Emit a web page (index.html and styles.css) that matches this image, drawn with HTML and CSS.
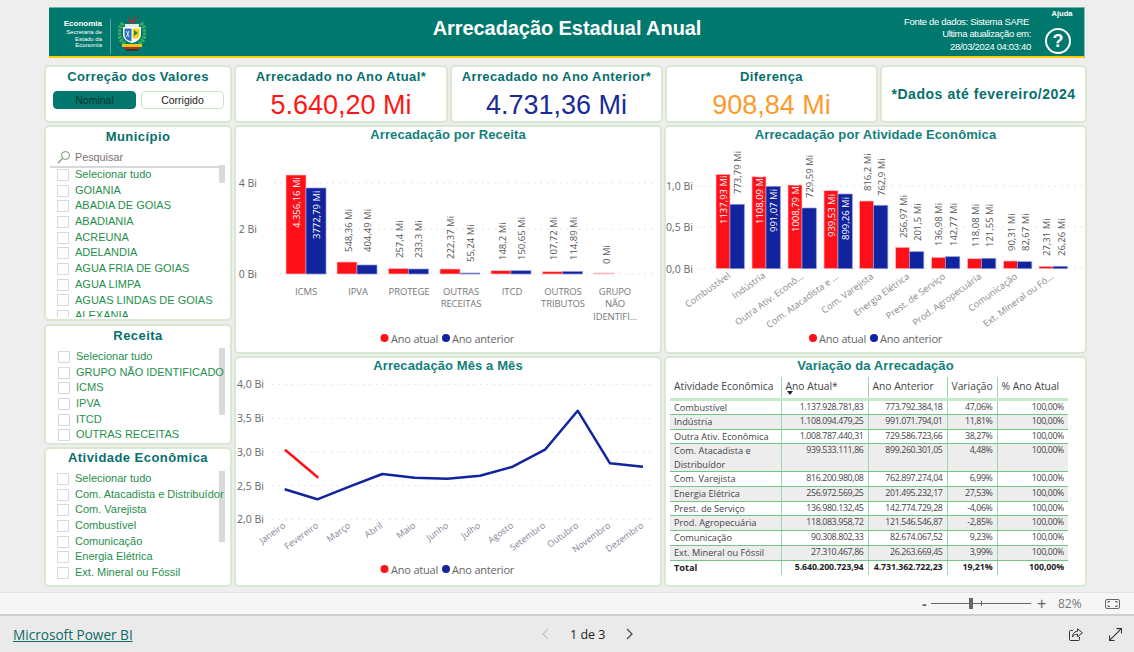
FILE: index.html
```html
<!DOCTYPE html>
<html lang="pt-BR">
<head>
<meta charset="utf-8">
<title>Arrecadação Estadual Anual</title>
<link rel="stylesheet" href="styles.css">
</head>
<body>
<main class="report">
  <header class="banner">
    <div class="brand">
      <div class="brand-text"><strong>Economia</strong><span>Secretaria de</span><span>Estado da</span><span>Economia</span></div>
      <svg class="crest" width="28" height="37" viewBox="0 0 28 37">
        <path d="M5 8C-1 15 0 24 7 29M23 8C29 15 28 24 21 29" fill="none" stroke="#3fae5a" stroke-width="4" stroke-dasharray="2.500 1"/>
        <path d="M9 9C7 14 7 22 10 27M19 9C21 14 21 22 18 27" fill="none" stroke="#0f5f45" stroke-width="1"/>
        <path d="M10 1l4 5 5-6-2 8h-6z" fill="#8a3d42"/>
        <rect x="7" y="9" width="14" height="3" fill="#dfeee4"/>
        <path d="M5 12h18v7c0 5-4 8-9 9-5-1-9-4-9-9z" fill="#fff"/>
        <path d="M6.500 13.500h7v13c-4-1-7-3-7-7z" fill="#2a6fc0"/>
        <path d="M14.500 13.500h7v6c0 2-1 3-2 4h-5z" fill="#f4d21c"/>
        <path d="M16 15l4 3-4 3z" fill="#2a8a3c"/>
        <path d="M8.500 16l2.500 6M11 16l-2.500 6" stroke="#fff" stroke-width=".8"/>
        <rect x="4" y="29" width="20" height="3" fill="#e9c61a"/>
        <rect x="6" y="32" width="16" height="2" fill="#b5302a"/>
        <rect x="8" y="34" width="12" height="2" fill="#26402a"/>
      </svg>
    </div>
    <h1 class="banner-title">Arrecadação Estadual Anual</h1>
    <div class="source">
      <span class="source-first">Fonte de dados: Sistema SARE</span>
      <span>Ultima atualização em:</span>
      <span>28/03/2024 04:03:40</span>
    </div>
    <div class="help">
      <span class="help-label">Ajuda</span>
      <span class="help-icon">?</span>
    </div>
  </header>

  <section class="kpis">
    <div class="card kpi kpi-toggle">
      <h2 class="kpi-title">Correção dos Valores</h2>
      <div class="toggle"><span class="toggle-btn is-on">Nominal</span><span class="toggle-btn">Corrigido</span></div>
    </div>
    <div class="card kpi kpi-wide">
      <h2 class="kpi-title">Arrecadado no Ano Atual*</h2>
      <div class="kpi-value red">5.640,20 Mi</div>
    </div>
    <div class="card kpi">
      <h2 class="kpi-title">Arrecadado no Ano Anterior*</h2>
      <div class="kpi-value navy">4.731,36 Mi</div>
    </div>
    <div class="card kpi">
      <h2 class="kpi-title">Diferença</h2>
      <div class="kpi-value orange">908,84 Mi</div>
    </div>
    <div class="card kpi kpi-note">*Dados até fevereiro/2024</div>
  </section>

  <section class="body-row">
    <aside class="filters">
      <div class="card slicer slicer-mun">
        <h2 class="slicer-title">Município</h2>
        <div class="search">
          <svg width="14" height="14" viewBox="0 0 14 14"><circle cx="8.500" cy="5.500" r="4" fill="none" stroke="#6f9a6f" stroke-width="1"/><path d="M5.500 8.500L1 13" stroke="#6f9a6f" stroke-width="1.300"/></svg>
          <span>Pesquisar</span>
        </div>
        <ul class="items items-clip">
          <li><i></i>Selecionar tudo</li>
          <li><i></i>GOIANIA</li>
          <li><i></i>ABADIA DE GOIAS</li>
          <li><i></i>ABADIANIA</li>
          <li><i></i>ACREUNA</li>
          <li><i></i>ADELANDIA</li>
          <li><i></i>AGUA FRIA DE GOIAS</li>
          <li><i></i>AGUA LIMPA</li>
          <li><i></i>AGUAS LINDAS DE GOIAS</li>
          <li><i></i>ALEXANIA</li>
        </ul>
        <b class="scroll scroll-mun"></b>
      </div>
      <div class="card slicer slicer-rec">
        <h2 class="slicer-title">Receita</h2>
        <ul class="items items-rec">
          <li><i></i>Selecionar tudo</li>
          <li><i></i>GRUPO NÃO IDENTIFICADO</li>
          <li><i></i>ICMS</li>
          <li><i></i>IPVA</li>
          <li><i></i>ITCD</li>
          <li><i></i>OUTRAS RECEITAS</li>
        </ul>
        <b class="scroll scroll-rec"></b>
      </div>
      <div class="card slicer slicer-ativ">
        <h2 class="slicer-title">Atividade Econômica</h2>
        <ul class="items items-ativ">
          <li><i></i>Selecionar tudo</li>
          <li><i></i>Com. Atacadista e Distribuídor</li>
          <li><i></i>Com. Varejista</li>
          <li><i></i>Combustível</li>
          <li><i></i>Comunicação</li>
          <li><i></i>Energia Elétrica</li>
          <li><i></i>Ext. Mineral ou Fóssil</li>
        </ul>
        <b class="scroll scroll-ativ"></b>
      </div>
    </aside>

    <div class="charts">
      <article class="card chart">
        <h2 class="chart-title">Arrecadação por Receita</h2>
        <svg class="plot" viewBox="2 22 424 205">
          <g class="grid"><path d="M40 58H423M40 104H423M40 149H423"/></g>
          <g class="axis"><text x="23" y="58">4 Bi</text><text x="23" y="104">2 Bi</text><text x="23" y="149">0 Bi</text></g>
          <g class="red-bar">
            <rect x="52" y="50" width="20" height="99"/><rect x="103" y="137" width="20" height="12"/><rect x="154.500" y="143.500" width="20" height="5.500"/><rect x="206" y="144" width="20" height="5"/><rect x="257" y="145.700" width="20" height="3.300"/><rect x="308.500" y="146.700" width="20" height="2.300"/>
          </g>
          <rect class="pale-bar" x="360" y="148" width="20" height="1"/>
          <g class="navy-bar">
            <rect x="72" y="63" width="20" height="86"/><rect x="123" y="140" width="20" height="9"/><rect x="174.500" y="144" width="20" height="5"/><rect x="226" y="148" width="20" height="1"/><rect x="277" y="145.700" width="20" height="3.300"/><rect x="328.500" y="146.500" width="20" height="2.500"/>
          </g>
          <g class="dl dl-in">
            <text transform="translate(62 103) rotate(-90)">4.356,16 Mi</text>
            <text transform="translate(82 114) rotate(-90)">3772,79 Mi</text>
          </g>
          <g class="dl">
            <text transform="translate(114 127) rotate(-90)">548,36 Mi</text>
            <text transform="translate(133 127) rotate(-90)">404,49 Mi</text>
            <text transform="translate(165 133) rotate(-90)">257,4 Mi</text>
            <text transform="translate(184 133) rotate(-90)">233,3 Mi</text>
            <text transform="translate(216 134) rotate(-90)">222,37 Mi</text>
            <text transform="translate(236 137) rotate(-90)">55,24 Mi</text>
            <text transform="translate(268 135) rotate(-90)">148,2 Mi</text>
            <text transform="translate(287 135) rotate(-90)">150,65 Mi</text>
            <text transform="translate(319 135) rotate(-90)">107,72 Mi</text>
            <text transform="translate(339 135) rotate(-90)">114,89 Mi</text>
            <text transform="translate(372 139) rotate(-90)">0 Mi</text>
          </g>
          <g class="cat">
            <text x="72" y="166">ICMS</text><text x="124" y="166">IPVA</text><text x="175" y="166">PROTEGE</text>
            <text x="227" y="166">OUTRAS</text><text x="227" y="178.500">RECEITAS</text>
            <text x="278" y="166">ITCD</text>
            <text x="329" y="166">OUTROS</text><text x="329" y="178.500">TRIBUTOS</text>
            <text x="381" y="166">GRUPO</text><text x="381" y="178.500">NÃO</text><text x="381" y="191">IDENTIFI...</text>
          </g>
          <g class="legend">
            <circle class="dot-red" cx="150.500" cy="213" r="4"/><text x="157" y="213">Ano atual</text>
            <circle class="dot-navy" cx="212" cy="213" r="4"/><text x="218" y="213">Ano anterior</text>
          </g>
        </svg>
      </article>

      <article class="card chart">
        <h2 class="chart-title">Arrecadação por Atividade Econômica</h2>
        <svg class="plot" viewBox="2 22 419 205">
          <g class="grid"><path d="M33 61H418M33 102H418M33 143.700H418"/></g>
          <g class="axis"><text x="29" y="61">1,0 Bi</text><text x="29" y="102">0,5 Bi</text><text x="29" y="143.700">0,0 Bi</text></g>
          <g class="red-bar">
            <rect x="52" y="49.300" width="14" height="94.400"/><rect x="88" y="51.700" width="14" height="92"/><rect x="124" y="60" width="14" height="83.700"/><rect x="160" y="65.700" width="14" height="78"/><rect x="195.500" y="76" width="14" height="67.700"/><rect x="231.500" y="122.300" width="14" height="21.400"/><rect x="267.500" y="132.300" width="14" height="11.400"/><rect x="303.500" y="133.700" width="14" height="10"/><rect x="339.500" y="136" width="14" height="7.700"/><rect x="375" y="141.300" width="14" height="2.400"/>
          </g>
          <g class="navy-bar">
            <rect x="66" y="79.300" width="14.300" height="64.400"/><rect x="102" y="61.300" width="14.300" height="82.400"/><rect x="138" y="83" width="14.300" height="60.700"/><rect x="174" y="69" width="14.300" height="74.700"/><rect x="209.500" y="80.300" width="14.300" height="63.400"/><rect x="245.500" y="126.700" width="14.300" height="17"/><rect x="281.500" y="131.700" width="14.300" height="12"/><rect x="317.500" y="133.300" width="14.300" height="10.400"/><rect x="353.500" y="136.700" width="14.300" height="7"/><rect x="389" y="141.300" width="14.300" height="2.400"/>
          </g>
          <g class="dl dl-in">
            <text transform="translate(59 99) rotate(-90)">1137,93 Mi</text>
            <text transform="translate(95 99) rotate(-90)">1108,09 Mi</text>
            <text transform="translate(109 107) rotate(-90)">991,07 Mi</text>
            <text transform="translate(131 107) rotate(-90)">1008,79 Mi</text>
            <text transform="translate(167 112) rotate(-90)">939,53 Mi</text>
            <text transform="translate(181 115) rotate(-90)">899,26 Mi</text>
          </g>
          <g class="dl">
            <text transform="translate(73 69) rotate(-90)">773,79 Mi</text>
            <text transform="translate(145 73) rotate(-90)">729,59 Mi</text>
            <text transform="translate(203 66) rotate(-90)">816,2 Mi</text>
            <text transform="translate(217 71) rotate(-90)">762,9 Mi</text>
            <text transform="translate(239 113) rotate(-90)">256,97 Mi</text>
            <text transform="translate(253 116) rotate(-90)">201,5 Mi</text>
            <text transform="translate(274 121) rotate(-90)">136,98 Mi</text>
            <text transform="translate(289 121) rotate(-90)">142,77 Mi</text>
            <text transform="translate(311 122) rotate(-90)">118,08 Mi</text>
            <text transform="translate(325 122) rotate(-90)">121,55 Mi</text>
            <text transform="translate(347 126) rotate(-90)">90,31 Mi</text>
            <text transform="translate(361 126) rotate(-90)">82,67 Mi</text>
            <text transform="translate(382 131) rotate(-90)">27,31 Mi</text>
            <text transform="translate(397 131) rotate(-90)">26,26 Mi</text>
          </g>
          <g class="slant">
            <text transform="translate(65 149) rotate(-36)">Combustível</text>
            <text transform="translate(100 149) rotate(-36)">Indústria</text>
            <text transform="translate(138 150) rotate(-36)">Outra Ativ. Econô...</text>
            <text transform="translate(173 150) rotate(-36)">Com. Atacadista e ...</text>
            <text transform="translate(208 150) rotate(-36)">Com. Varejista</text>
            <text transform="translate(244 150) rotate(-36)">Energia Elétrica</text>
            <text transform="translate(280 150) rotate(-36)">Prest. de Serviço</text>
            <text transform="translate(316 150) rotate(-36)">Prod. Agropecuária</text>
            <text transform="translate(352 150) rotate(-36)">Comunicação</text>
            <text transform="translate(388 150) rotate(-36)">Ext. Mineral ou Fó...</text>
          </g>
          <g class="legend">
            <circle class="dot-red" cx="149" cy="213" r="4"/><text x="155" y="213">Ano atual</text>
            <circle class="dot-navy" cx="210" cy="213" r="4"/><text x="216" y="213">Ano anterior</text>
          </g>
        </svg>
      </article>

      <article class="card chart">
        <h2 class="chart-title">Arrecadação Mês a Mês</h2>
        <svg class="plot" viewBox="2 24 424 207">
          <g class="grid"><path d="M38 30.300H420M38 64.300H420M38 98H420M38 131.700H420M38 165.300H420"/></g>
          <g class="axis"><text x="30" y="30.300">4,0 Bi</text><text x="30" y="64.300">3,5 Bi</text><text x="30" y="98">3,0 Bi</text><text x="30" y="131.700">2,5 Bi</text><text x="30" y="165.300">2,0 Bi</text></g>
          <polyline class="line-navy" points="50.700,135.300 83.300,145.300 116,132.300 148.300,120 180.700,123.700 213.300,124.700 246,121.700 278.700,112.700 311,95.700 343.700,56.700 376,109.300 409,112.700"/>
          <polyline class="line-red" points="51,95.700 84.300,123.700"/>
          <g class="slant slant-months">
            <text transform="translate(50 170) rotate(-36)">Janeiro</text>
            <text transform="translate(83 170) rotate(-36)">Fevereiro</text>
            <text transform="translate(115 170) rotate(-36)">Março</text>
            <text transform="translate(147 170) rotate(-36)">Abril</text>
            <text transform="translate(180 170) rotate(-36)">Maio</text>
            <text transform="translate(213 170) rotate(-36)">Junho</text>
            <text transform="translate(245 170) rotate(-36)">Julho</text>
            <text transform="translate(278 170) rotate(-36)">Agosto</text>
            <text transform="translate(310 170) rotate(-36)">Setembro</text>
            <text transform="translate(343 170) rotate(-36)">Outubro</text>
            <text transform="translate(375 170) rotate(-36)">Novembro</text>
            <text transform="translate(408 170) rotate(-36)">Dezembro</text>
          </g>
          <g class="legend">
            <circle class="dot-red" cx="150.500" cy="215" r="4"/><text x="157" y="215">Ano atual</text>
            <circle class="dot-navy" cx="212" cy="215" r="4"/><text x="218" y="215">Ano anterior</text>
          </g>
        </svg>
      </article>

      <article class="card chart">
        <h2 class="chart-title">Variação da Arrecadação</h2>
        <table class="matrix">
          <colgroup><col class="c1"><col class="c2"><col class="c3"><col class="c4"><col class="c5"></colgroup>
          <thead>
            <tr><th>Atividade Econômica</th><th>Ano Atual*<span class="sort"></span></th><th>Ano Anterior</th><th>Variação</th><th>% Ano Atual</th></tr>
          </thead>
          <tbody>
            <tr><td>Combustível</td><td>1.137.928.781,83</td><td>773.792.384,18</td><td>47,06%</td><td>100,00%</td></tr>
            <tr><td>Indústria</td><td>1.108.094.479,25</td><td>991.071.794,01</td><td>11,81%</td><td>100,00%</td></tr>
            <tr><td>Outra Ativ. Econômica</td><td>1.008.787.440,31</td><td>729.586.723,66</td><td>38,27%</td><td>100,00%</td></tr>
            <tr><td>Com. Atacadista e Distribuídor</td><td>939.533.111,86</td><td>899.260.301,05</td><td>4,48%</td><td>100,00%</td></tr>
            <tr><td>Com. Varejista</td><td>816.200.980,08</td><td>762.897.274,04</td><td>6,99%</td><td>100,00%</td></tr>
            <tr><td>Energia Elétrica</td><td>256.972.569,25</td><td>201.495.232,17</td><td>27,53%</td><td>100,00%</td></tr>
            <tr><td>Prest. de Serviço</td><td>136.980.132,45</td><td>142.774.729,28</td><td>-4,06%</td><td>100,00%</td></tr>
            <tr><td>Prod. Agropecuária</td><td>118.083.958,72</td><td>121.546.546,87</td><td>-2,85%</td><td>100,00%</td></tr>
            <tr><td>Comunicação</td><td>90.308.802,33</td><td>82.674.067,52</td><td>9,23%</td><td>100,00%</td></tr>
            <tr><td>Ext. Mineral ou Fóssil</td><td>27.310.467,86</td><td>26.263.669,45</td><td>3,99%</td><td>100,00%</td></tr>
          </tbody>
          <tfoot>
            <tr><td>Total</td><td>5.640.200.723,94</td><td>4.731.362.722,23</td><td>19,21%</td><td>100,00%</td></tr>
          </tfoot>
        </table>
      </article>
    </div>
  </section>
</main>

<div class="zoombar">
  <span class="zoom-sign">-</span>
  <span class="slider"><b class="thumb"></b><b class="tick"></b></span>
  <span class="zoom-sign zoom-plus">+</span>
  <span class="zoom-pct">82%</span>
  <svg class="fit" width="15" height="10" viewBox="0 0 15 10"><rect x=".5" y=".5" width="14" height="9" rx="1.500" fill="none" stroke="#666"/><path d="M3 4V2.500H5M10 2.500H12V4M12 6V7.500H10M5 7.500H3V6" fill="none" stroke="#666"/></svg>
</div>

<footer class="footer">
  <a class="pbi-link" href="#">Microsoft Power BI</a>
  <nav class="pager">
    <svg width="8" height="12" viewBox="0 0 8 12"><path d="M7 1L2 6l5 5" fill="none" stroke="#c4c4c4" stroke-width="1.200"/></svg>
    <span>1 de 3</span>
    <svg width="8" height="12" viewBox="0 0 8 12"><path d="M1 1l5 5-5 5" fill="none" stroke="#444" stroke-width="1.200"/></svg>
  </nav>
  <div class="foot-icons">
    <svg width="14" height="13" viewBox="0 0 14 13"><path d="M4 2.500H1.500a1 1 0 0 0-1 1v8a1 1 0 0 0 1 1h8a1 1 0 0 0 1-1V9" fill="none" stroke="#333"/><path d="M8.500.8l5 4-5 4V6.300C6 6.300 4.500 7 3.500 9 3.500 5.500 5.500 3.500 8.500 3.300z" fill="none" stroke="#333"/></svg>
    <svg width="13" height="13" viewBox="0 0 13 13"><path d="M.8 12.200L12.200.8M7.500.6h5v5M.6 7.500v5h5" fill="none" stroke="#333" stroke-width="1.100"/></svg>
  </div>
</footer>
</body>
</html>
```
FILE: styles.css
```css
* { box-sizing: border-box; }
html, body { margin: 0; height: 652px; overflow: hidden; }
body {
  background: #eeeeee;
  font-family: "Liberation Sans", Arial, sans-serif;
  display: flex;
  flex-direction: column;
}
h1, h2, ul { margin: 0; padding: 0; }
ul { list-style: none; }

.report { height: 592px; padding: 7px 0 0 44px; }

.banner {
  display: flex;
  align-items: flex-start;
  width: 1035px;
  height: 51px;
  margin-left: 5px;
  background: #00786d;
  border-top: 1px solid #6fb0a8;
  border-bottom: 2px solid #ffcb05;
  color: #fff;
  box-shadow: 1px 0 0 #8fbdb6;
}
.brand { display: flex; width: 105px; padding-top: 11px; }
.brand-text {
  display: flex;
  flex-direction: column;
  align-items: flex-end;
  width: 62px;
  height: 35px;
  padding-right: 8px;
  border-right: 1px solid #5aa79e;
  font-size: 6px;
  line-height: 6.600px;
  white-space: nowrap;
}
.brand-text strong { font-size: 8px; line-height: 10px; }
.crest { margin: -4px 0 0 7px; }
.banner-title {
  flex: none;
  width: 280px;
  margin: 8px 0 0 273px;
  text-align: center;
  font-size: 20px;
  line-height: 24px;
  font-weight: 700;
  letter-spacing: -.07px;
  white-space: nowrap;
}
.source {
  flex: none;
  width: 135px;
  margin-left: 189px;
  padding-top: 8px;
  display: flex;
  flex-direction: column;
  align-items: flex-end;
  font-size: 9.500px;
  line-height: 12.300px;
  letter-spacing: -.33px;
  white-space: nowrap;
}
.source-first { margin-right: 2px; }
.help { flex: none; margin-left: 11px; width: 32px; display: flex; flex-direction: column; align-items: center; }
.help-label { margin-left: 8px; font-size: 7.500px; font-weight: 700; line-height: 10px; padding-top: 1px; }
.help-icon {
  width: 26px;
  height: 26px;
  margin-top: 9px;
  border: 2px solid #fff;
  border-radius: 50%;
  text-align: center;
  font-size: 18px;
  font-weight: 700;
  line-height: 22px;
}

.card {
  position: relative;
  background: #fff;
  border: 2px solid #d9e8d2;
  border-radius: 5px;
}

.kpis { display: flex; gap: 2px; height: 58px; margin-top: 7px; }
.kpi { width: 213px; text-align: center; padding-top: 2px; }
.kpi-toggle { width: 188px; }
.kpi-wide { width: 214px; }
.kpi-title {
  font-size: 13px;
  line-height: 15px;
  font-weight: 700;
  letter-spacing: .4px;
  color: #06706c;
  white-space: nowrap;
}
.kpi-value { font-size: 27px; line-height: 31px; margin-top: 6px; }
.red { color: #ff1616; }
.navy { color: #1a2a96; }
.orange { color: #fb9b2c; }
.kpi-note {
  width: 207px;
  padding: 0;
  display: flex;
  align-items: center;
  justify-content: center;
  font-size: 14px;
  font-weight: 700;
  letter-spacing: .55px;
  color: #06706c;
  white-space: nowrap;
}
.toggle { display: flex; gap: 5px; margin: 7px 0 0 7px; }
.toggle-btn {
  width: 83px;
  height: 18px;
  border: 1px solid #cfe3c6;
  border-radius: 4px;
  font-size: 10.500px;
  line-height: 16px;
  color: #222;
}
.toggle-btn.is-on { background: #00786d; border-color: #00786d; color: #06302c; }

.body-row { display: flex; gap: 2px; height: 462px; margin-top: 2px; }
.filters { display: flex; flex-direction: column; width: 188px; }
.slicer { padding-top: 1px; }
.slicer-mun { height: 196px; }
.slicer-rec { height: 121px; margin-top: 3px; }
.slicer-ativ { height: 140px; margin-top: 2px; padding-top: 0; }
.slicer-title {
  text-align: center;
  font-size: 13px;
  line-height: 17px;
  font-weight: 700;
  letter-spacing: .45px;
  color: #06706c;
  white-space: nowrap;
}
.search {
  display: flex;
  align-items: center;
  gap: 4px;
  height: 20px;
  margin: 3px 9px 0 4px;
  padding-left: 7px;
  border-bottom: 2px solid #d8d8d8;
  font-size: 10.800px;
  color: #7d6f6f;
}
.items {
  position: relative;
  z-index: 1;
  margin: 4px 0 0 11px;
  font-size: 11px;
  line-height: 15.700px;
  color: #1f8f4b;
  white-space: nowrap;
}
.items-rec { margin: 5px 0 0 12px; }
.items-ativ { margin-top: 5px; }
.items-clip { height: 150px; overflow: hidden; margin-top: -1px; }
.items li { display: flex; align-items: center; height: 15.700px; }
.items i {
  flex: none;
  width: 12px;
  height: 12px;
  margin-right: 6px;
  border: 1px solid #d6d9e4;
  background: #fff;
}
.scroll { position: absolute; left: 173px; width: 6px; background: #d9d9d9; }
.scroll-mun { top: 38px; height: 18px; }
.scroll-rec { top: 22px; height: 67px; }
.scroll-ativ { top: 22px; height: 71px; }

.charts {
  display: grid;
  grid-template-columns: 428px 423px;
  grid-template-rows: 229px 231px;
  gap: 2px;
}
.chart { display: flex; flex-direction: column; }
.chart-title {
  height: 20px;
  flex: none;
  text-align: center;
  font-size: 13px;
  line-height: 15px;
  font-weight: 700;
  letter-spacing: .1px;
  color: #12807a;
  white-space: nowrap;
}
.plot { display: block; flex: 1; width: 100%; min-height: 0; }
.plot text { font-family: "Open Sans", sans-serif; dominant-baseline: central; }
.grid path { fill: none; stroke: #dcdcdc; stroke-dasharray: 1.500 5; }
.axis text { font-size: 10.500px; fill: #666; text-anchor: end; }
.red-bar rect { fill: #ff1019; stroke: #ffc0c4; stroke-width: .7; }
.navy-bar rect { fill: #12239e; stroke: #8f98dc; stroke-width: .7; }
.pale-bar { fill: #ff9aa0; stroke: #ffc0c4; stroke-width: .7; }
.dl text { font-size: 9.500px; fill: #555; }
.dl-in text { fill: #fff; }
.cat text { font-size: 9.500px; letter-spacing: -.1px; fill: #777; text-anchor: middle; }
.slant text { font-size: 9.200px; fill: #8b8b8b; text-anchor: end; }
.slant-months text { font-size: 9px; fill: #85859a; }
.legend text { font-size: 11px; letter-spacing: -.2px; fill: #666; }
.dot-red { fill: #ff1019; }
.dot-navy { fill: #12239e; }
.line-navy { fill: none; stroke: #12239e; stroke-width: 2.500; stroke-linejoin: round; }
.line-red { fill: none; stroke: #ff1019; stroke-width: 2.500; }

.matrix {
  width: 398px;
  margin: -1px 0 0 4px;
  table-layout: fixed;
  border-collapse: collapse;
  font-family: "Open Sans", sans-serif;
  font-size: 8.800px;
  letter-spacing: -.36px;
  line-height: 13.500px;
  color: #444;
}
.c1 { width: 111px; }
.c2 { width: 87px; }
.c3 { width: 79px; }
.c4 { width: 50px; }
.c5 { width: 71px; }
.matrix th {
  height: 22px;
  padding: 1px 4px 0;
  vertical-align: top;
  text-align: left;
  font-size: 10.300px;
  font-weight: 400;
  letter-spacing: 0;
  line-height: 16px;
  white-space: nowrap;
  border-right: 1px solid #9ad5a5;
  border-bottom: 3px solid #c8e8cc;
}
.matrix th:last-child, .matrix td:last-child { border-right: 0; }
.sort {
  display: block;
  width: 0;
  height: 0;
  margin: -3px 0 0 1px;
  border: 3.500px solid transparent;
  border-top: 4px solid #222;
  border-bottom: 0;
}
.matrix td {
  height: 14.700px;
  padding: 0 4px;
  vertical-align: top;
  text-align: right;
  border-right: 1px solid #9ad5a5;
  border-bottom: 1px solid #74c583;
  white-space: nowrap;
}
.matrix td:first-child {
  text-align: left;
  white-space: normal;
  font-size: 9.200px;
  letter-spacing: 0;
}
.matrix tbody tr:nth-child(even) td { background: #ededed; }
.matrix tfoot td { border-bottom: 0; font-weight: 700; letter-spacing: -.1px; color: #222; }

.zoombar {
  display: flex;
  align-items: center;
  height: 24px;
  padding-left: 922px;
  background: #f6f6f6;
  border-top: 1px solid #e2e2e2;
  border-bottom: 2px solid #cfcfcf;
  color: #666;
}
.zoom-sign { width: 9px; font-size: 14px; font-weight: 700; line-height: 16px; }
.zoom-plus { width: 14px; margin-left: 6px; font-weight: 400; font-size: 16px; }
.slider { position: relative; width: 100px; height: 1px; background: #666; }
.thumb { position: absolute; left: 38px; top: -5px; width: 4px; height: 11px; background: #666; }
.tick { position: absolute; left: 50px; top: -2px; width: 1px; height: 5px; background: #666; }
.zoom-pct { margin-left: 7px; font-family: "Open Sans", sans-serif; font-size: 12px; color: #777; }
.fit { margin-left: 23px; }

.footer {
  display: flex;
  align-items: center;
  flex: 1;
  padding-left: 13px;
  background: #eaeaea;
}
.pbi-link {
  width: 120px;
  font-family: "Open Sans", sans-serif;
  font-size: 13.600px;
  color: #0e6b68;
  text-decoration: underline;
  white-space: nowrap;
}
.pager {
  display: flex;
  align-items: center;
  gap: 21px;
  margin-left: 408px;
  font-family: "Open Sans", sans-serif;
  font-size: 12.500px;
  color: #222;
}
.foot-icons { display: flex; align-items: center; gap: 26px; margin-left: 435px; }
```
